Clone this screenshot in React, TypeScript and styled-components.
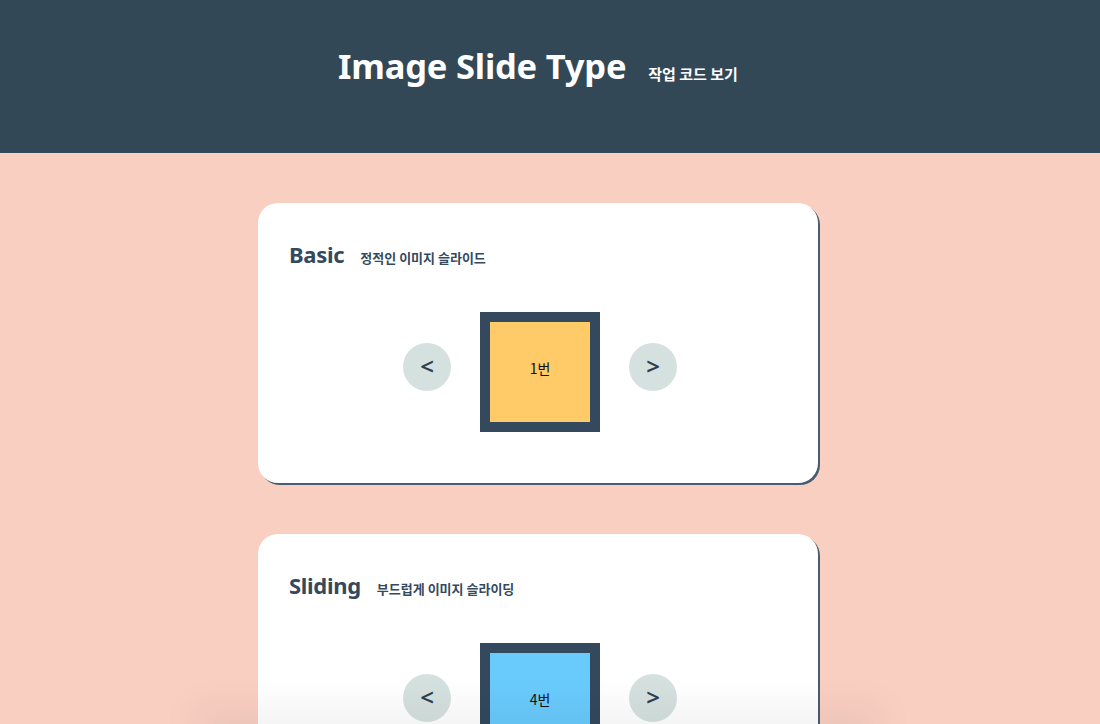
import React from "react";
import styled, { createGlobalStyle } from "styled-components";

const Global = createGlobalStyle`
  html, body { margin: 0; padding: 0; }
  body {
    background: #f9cfc2;
    font-family: "Noto Sans", "Noto Sans CJK KR", sans-serif;
    color: #34495e;
  }
`;

const Header = styled.header`
  height: 153px;
  background: #324857;
  display: flex;
  align-items: flex-start;
  justify-content: center;
  gap: 22px;
  padding: 40px 24px 0 0;
  box-sizing: border-box;
`;

const HeaderTitle = styled.h1`
  margin: 0;
  font-family: "Noto Sans", "Noto Sans CJK KR", sans-serif;
  font-weight: 700;
  font-size: 34.5px;
  line-height: 52px;
  color: #ffffff;
  letter-spacing: -0.2px;
`;

const HeaderLink = styled.a`
  font-family: "Noto Sans CJK KR", sans-serif;
  font-weight: 700;
  font-size: 15px;
  line-height: 20px;
  color: #ffffff;
  text-decoration: none;
  margin-top: 24px;
`;

const Main = styled.main`
  display: flex;
  flex-direction: column;
  align-items: center;
  gap: 51px;
  padding: 50px 24px 60px 0;
`;

const Card = styled.section`
  width: 560px;
  height: 280px;
  box-sizing: border-box;
  background: #ffffff;
  border-radius: 20px;
  box-shadow: 2px 2px 0 #4a5d70;
  padding: 36px 30px 0 31px;
  display: flex;
  flex-direction: column;
`;

const TitleRow = styled.div`
  display: flex;
  align-items: baseline;
  gap: 16px;
`;

const CardTitle = styled.h2`
  margin: 0;
  font-family: "Noto Sans", sans-serif;
  font-weight: 700;
  font-size: 22px;
  color: #34495e;
  letter-spacing: -0.3px;
`;

const CardSub = styled.span`
  font-family: "Noto Sans CJK KR", sans-serif;
  font-weight: 700;
  font-size: 13px;
  color: #34495e;
`;

const SlideRow = styled.div`
  display: flex;
  align-items: center;
  justify-content: center;
  gap: 29px;
  margin-top: 43px;
  margin-left: 3px;
`;

const ArrowButton = styled.button`
  width: 48px;
  height: 48px;
  border-radius: 50%;
  border: none;
  background: #d5e1df;
  color: #2f3f4f;
  font-family: "Noto Sans", sans-serif;
  font-size: 24px;
  font-weight: 600;
  display: flex;
  align-items: center;
  justify-content: center;
  padding: 0 0 4px 0;
  margin-bottom: 10px;
  cursor: pointer;
`;

const Frame = styled.div`
  width: 120px;
  height: 120px;
  box-sizing: border-box;
  border: 10px solid #34495e;
  overflow: hidden;
`;

const Slide = styled.div<{ $bg: string }>`
  width: 100px;
  height: 100px;
  background: ${(p) => p.$bg};
  display: flex;
  align-items: center;
  justify-content: center;
  padding-bottom: 8px;
  box-sizing: border-box;
  font-family: "Noto Sans CJK KR", sans-serif;
  font-size: 14px;
  color: #111;
`;

const BottomShade = styled.div`
  position: fixed;
  left: calc(50% - 12px);
  bottom: -4px;
  transform: translateX(-50%);
  width: 650px;
  height: 4px;
  box-shadow: 0 0 36px 20px rgba(0, 0, 0, 0.05);
  background: rgba(0, 0, 0, 0.15);
  pointer-events: none;
`;

const cards = [
  { title: "Basic", sub: "정적인 이미지 슬라이드", label: "1번", bg: "#fecb68" },
  { title: "Sliding", sub: "부드럽게 이미지 슬라이딩", label: "4번", bg: "#69cbfc" },
];

export default function App() {
  return (
    <>
      <Global />
      <Header>
        <HeaderTitle>Image Slide Type</HeaderTitle>
        <HeaderLink href="#">작업 코드 보기</HeaderLink>
      </Header>
      <Main>
        {cards.map((c) => (
          <Card key={c.title}>
            <TitleRow>
              <CardTitle>{c.title}</CardTitle>
              <CardSub>{c.sub}</CardSub>
            </TitleRow>
            <SlideRow>
              <ArrowButton>&lt;</ArrowButton>
              <Frame>
                <Slide $bg={c.bg}>{c.label}</Slide>
              </Frame>
              <ArrowButton>&gt;</ArrowButton>
            </SlideRow>
          </Card>
        ))}
      </Main>
      <BottomShade />
    </>
  );
}
